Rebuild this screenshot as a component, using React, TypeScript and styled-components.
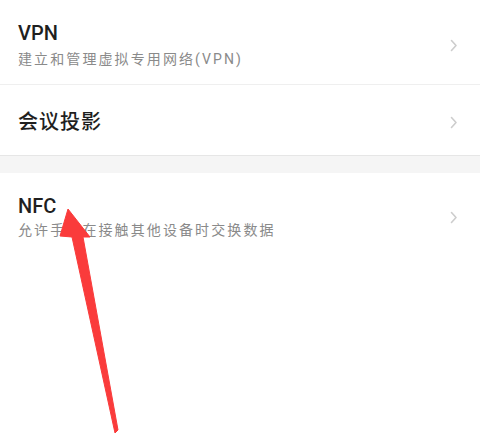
import React from 'react';
import styled, { createGlobalStyle } from 'styled-components';

const GlobalStyle = createGlobalStyle`
    html, body {
        margin: 0;
        padding: 0;
        background: #ffffff;
    }
    body {
        font-family: Roboto, "Noto Sans CJK SC", "Noto Sans", sans-serif;
    }
`;

const Page = styled.div`
    position: relative;
    width: 480px;
    height: 446px;
    overflow: hidden;
    background: #ffffff;
`;

const Row = styled.div<{ $top: number; $bottom: number }>`
    display: flex;
    align-items: center;
    justify-content: space-between;
    padding: ${p => p.$top}px 22px ${p => p.$bottom}px 18px;
`;

const Divider = styled.div`
    height: 1px;
    background: #efefef;
`;

const GroupGap = styled.div`
    height: 17px;
    border-top: 1px solid #e6e6e6;
    background: #f5f5f5;
`;

const Texts = styled.div`
    display: flex;
    flex-direction: column;
`;

const Title = styled.div<{ $cjk?: boolean }>`
    font-size: 20px;
    line-height: 24px;
    font-weight: 500;
    color: #1f1f1f;
    letter-spacing: ${p => (p.$cjk ? '1px' : '0')};
`;

const Subtitle = styled.div<{ $gap: number }>`
    margin-top: ${p => p.$gap}px;
    font-size: 14px;
    line-height: 20px;
    color: #8a8a8a;
    letter-spacing: 2.1px;
    white-space: nowrap;
`;

const Chevron = () => (
    <svg width="8" height="13" viewBox="0 0 8 13">
        <polyline
            points="1.5,1.5 6,6.5 1.5,11.5"
            fill="none"
            stroke="#cdcdcd"
            strokeWidth="1.6"
            strokeLinecap="round"
            strokeLinejoin="round"
        />
    </svg>
);

const ArrowLayer = styled.svg`
    position: absolute;
    left: 0;
    top: 0;
    pointer-events: none;
`;

export default function App() {
    return (
        <>
            <GlobalStyle />
            <Page>
                <Row $top={21} $bottom={15}>
                    <Texts>
                        <Title>VPN</Title>
                        <Subtitle $gap={4}>建立和管理虚拟专用网络(VPN)</Subtitle>
                    </Texts>
                    <Chevron />
                </Row>
                <Divider />
                <Row $top={25} $bottom={21}>
                    <Texts>
                        <Title $cjk>会议投影</Title>
                    </Texts>
                    <Chevron />
                </Row>
                <GroupGap />
                <Row $top={21} $bottom={20}>
                    <Texts>
                        <Title>NFC</Title>
                        <Subtitle $gap={2}>允许手机在接触其他设备时交换数据</Subtitle>
                    </Texts>
                    <Chevron />
                </Row>
                <ArrowLayer width="480" height="446" viewBox="0 0 480 446">
                    <polygon
                        points="68,209 90,237 83,237 118,430 115,433 72,237 60,236"
                        fill="#fa3b3b"
                        stroke="#fa3b3b"
                        strokeWidth="1"
                        strokeLinejoin="round"
                    />
                </ArrowLayer>
            </Page>
        </>
    );
}
